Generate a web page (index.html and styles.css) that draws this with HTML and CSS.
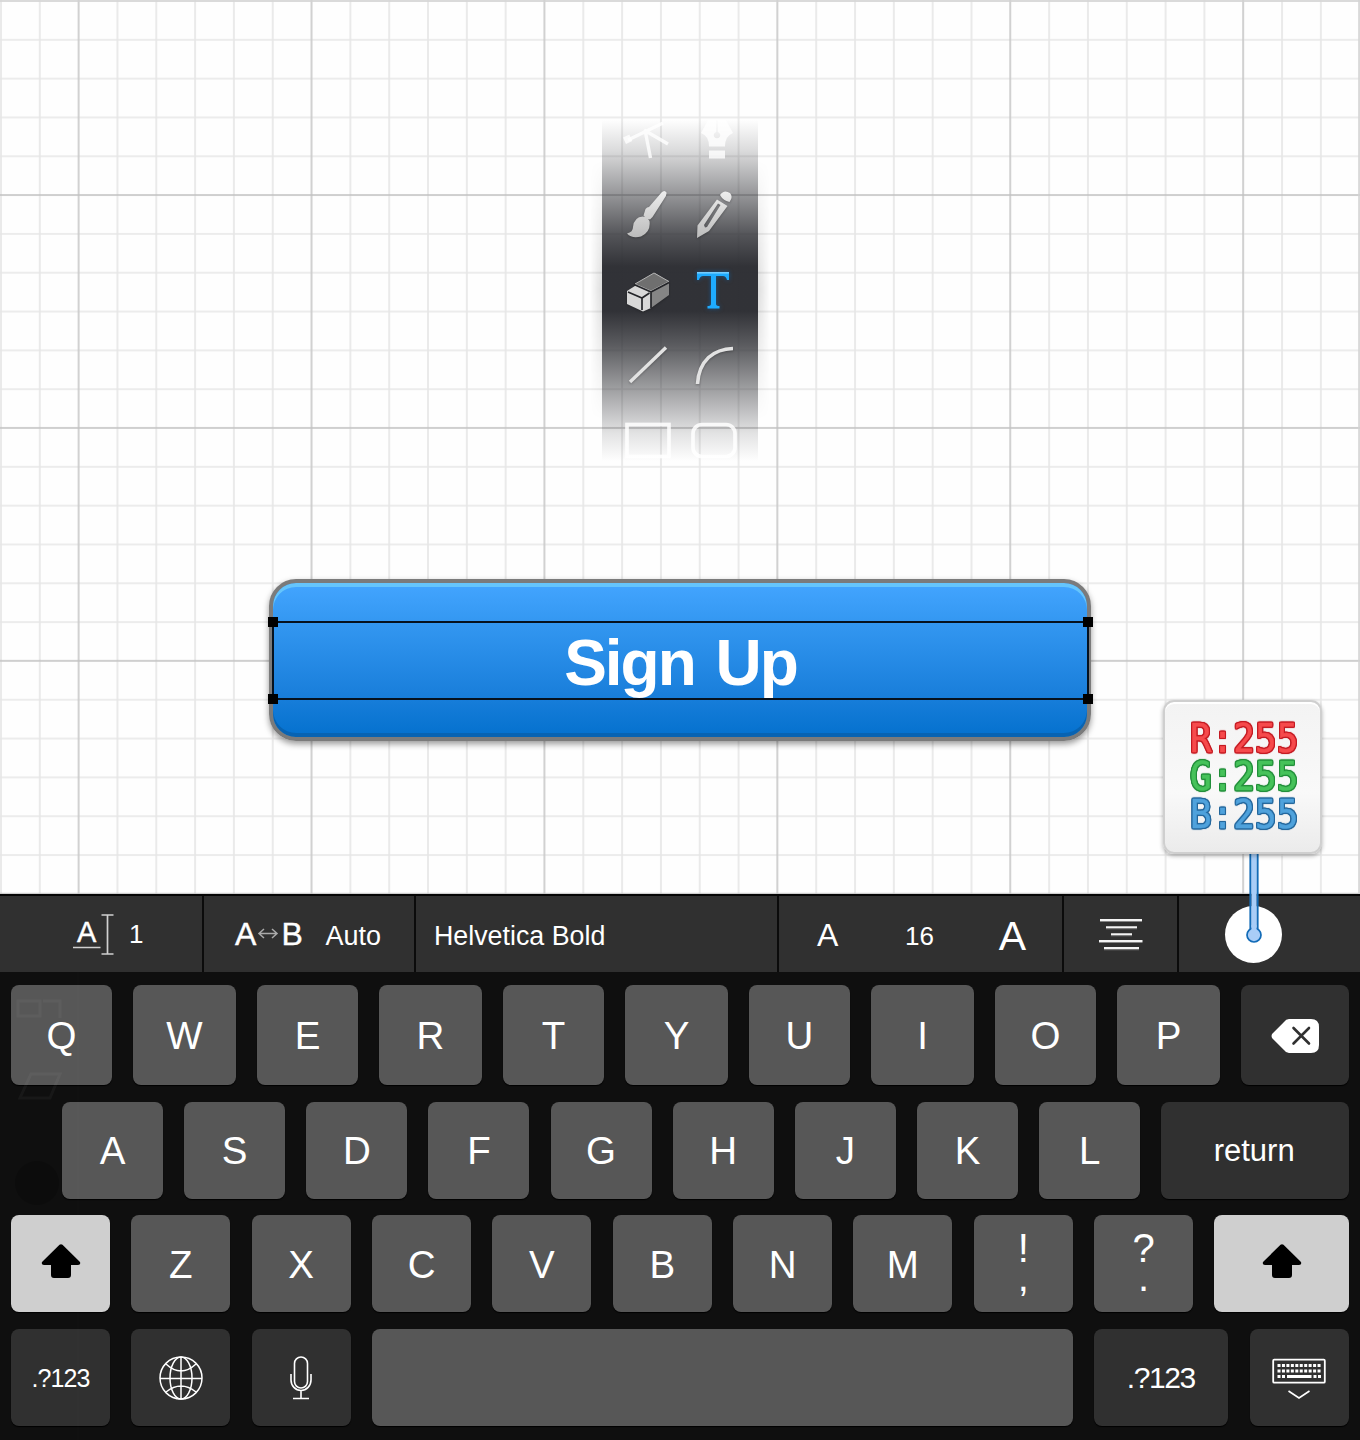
FILE: index.html
```html
<!DOCTYPE html>
<html lang="en">
<head>
<meta charset="utf-8">
<title>Vector Editor</title>
<link rel="stylesheet" href="styles.css">
</head>
<body>
<div class="app">
  <main class="canvas">
    <svg class="grid" width="1360" height="894">
      <defs>
        <pattern id="minor" x="0" y="0" width="38.82" height="38.82" patternUnits="userSpaceOnUse">
          <path d="M1 0V39M0 1H39" stroke="#000" stroke-opacity=".09" stroke-width="1.7"/>
        </pattern>
        <pattern id="major" x="77.6" y="194" width="232.9" height="232.9" patternUnits="userSpaceOnUse">
          <path d="M1 0V233M0 1H233" stroke="#000" stroke-opacity=".16" stroke-width="1.3"/>
        </pattern>
      </defs>
      <rect width="1360" height="894" fill="url(#minor)"/>
      <rect width="1360" height="894" fill="url(#major)"/>
      <path d="M0 1H1360M1359 0V894" stroke="#d4d4d4" stroke-width="1.5"/>
    </svg>

    <div class="palette">
      <svg class="tool faded" viewBox="0 0 66 75"><g stroke="#fff" stroke-width="3.4" fill="none" opacity=".8"><path d="M13 37L48 20M29 27L53 41M30 27L35.500 55"/></g><rect x="9" y="33" width="7" height="7" fill="#fff" opacity=".8" transform="rotate(-25 12 36)"/></svg>
      <svg class="tool faded" viewBox="0 0 66 75"><path fill="#fff" opacity=".8" fill-rule="evenodd" d="M35.300 12V29A3.200 3.200 0 1 0 36.700 29V12L45 17L52 30Q44 33 44 43.500H28Q28 33 20 30L27 17ZM28 47.500H44V55.500H28Z"/></svg>
      <svg class="tool" viewBox="0 0 66 75"><defs><linearGradient id="metal" x2="0" y2="1"><stop stop-color="#ededed"/><stop offset="1" stop-color="#bcbcbc"/></linearGradient></defs><path fill="url(#metal)" d="M46.500 14.500Q49.500 11.500 51.500 14.500Q52 17 49 21L37.500 39L35 41.500Q31 41 28.500 37.500L30.500 31Q32 29 34 29ZM28 38.500Q33 39.500 34.500 43Q36 54 26 58.500Q17 61 12 55.500Q18 54 18 49Q19 39 28 38.500Z"/></svg>
      <svg class="tool" viewBox="0 0 66 75"><path fill="url(#metal)" fill-rule="evenodd" d="M36 21.500L46.500 28L28 53L16 60L16.500 47.500ZM37 25.500L23 47L24 49.500L26 49L39.500 27ZM39 17Q43 11 49 15Q52.500 19 48.500 24Q42 22.500 39 17Z"/></svg>
      <svg class="tool" viewBox="0 0 66 75"><path d="M12 38L23 31L36 37V55L28 58.500L12 51Z" fill="#d8d8d8"/><path d="M24 32L40 24V20L54 29V42L36 55V39Z" fill="#858585"/><path d="M20 31L39 20L54 28.500L36 38Z" fill="#6f6f6f" stroke="#b4b4b4"/><path d="M13 39L27 45L34.500 40M27 45V57M19 31.500L36 39V55M36 39L54 29.500" stroke="#242529" stroke-width="1.700" fill="none"/></svg>
      <svg class="tool tool-active" viewBox="0 0 66 75"><path fill="#1eabff" d="M16 19H48V27H46Q45 23 42 23H35V51Q35 53 38.500 53V55.500H26.500V53Q30 53 30 51V23H22Q19 23 18 27H16Z"/><path d="M16 19.800H48" stroke="#79ceff" stroke-width="1.500"/></svg>
      <svg class="tool" viewBox="0 0 66 75"><path d="M15 54L51 19.500" stroke="#e2e2e2" stroke-width="3.400"/></svg>
      <svg class="tool" viewBox="0 0 66 75"><path d="M16.500 56Q17.500 39 27.500 29.500Q37 21 52 20.500" fill="none" stroke="#e2e2e2" stroke-width="3.600"/></svg>
      <svg class="tool faded" viewBox="0 0 66 75"><rect x="12" y="21.500" width="42" height="32" fill="none" stroke="#fff" stroke-opacity=".85" stroke-width="3.700"/></svg>
      <svg class="tool faded" viewBox="0 0 66 75"><rect x="12" y="21.500" width="42" height="32" rx="9" fill="none" stroke="#fff" stroke-opacity=".85" stroke-width="3.700"/></svg>
    </div>

    <div class="artwork">
      <div class="textbox">Sign Up<i class="handle nw"></i><i class="handle ne"></i><i class="handle sw"></i><i class="handle se"></i></div>
    </div>
  </main>

  <div class="toolbar">
    <div class="cell spacing">
      <svg width="42" height="44" viewBox="0 0 42 44"><text x="5" y="31" class="glyph" font-size="29">A</text><path d="M1 36.500H28.500M29.500 4H41.500M29.500 43H41.500M35.500 4V43" stroke="#d0d0d0" stroke-width="1.700"/></svg>
      <span>1</span>
    </div>
    <div class="cell width">
      <svg width="69" height="34" viewBox="0 0 69 34"><text x="0" y="29" class="glyph" font-size="32">A</text><text x="46.500" y="29" class="glyph" font-size="32">B</text><path d="M24 17.500H42M29 13L24 17.500L29 22M37 13L42 17.500L37 22" stroke="#aaa" stroke-width="1.500" fill="none"/></svg>
      <span>Auto</span>
    </div>
    <div class="cell font">Helvetica Bold</div>
    <div class="cell size"><span class="smaller">A</span><span class="value">16</span><span class="larger">A</span></div>
    <div class="cell align"><svg width="46" height="36" viewBox="0 0 46 36"><path d="M2 2H44M8 9.200H39M13 16.200H34M1 23H44.500M6 30H41" stroke="#f4f4f4" stroke-width="2"/><path d="M2 3.500H44M8 10.700H39M13 17.700H34M1 24.500H44.500M6 31.700H41" stroke="#858585"/></svg></div>
    <div class="cell color"><span class="swatch"></span></div>
  </div>

  <div class="keyboard">
    <div class="row row-1">
      <div class="key">Q</div><div class="key">W</div><div class="key">E</div><div class="key">R</div><div class="key">T</div><div class="key">Y</div><div class="key">U</div><div class="key">I</div><div class="key">O</div><div class="key">P</div>
      <div class="key dark"><svg width="48" height="34" viewBox="0 0 48 34"><path fill="#fff" d="M18 0H40Q48 0 48 8V26Q48 34 40 34H18Q15 34 13 31L1 19Q0 17 1 15L13 3Q15 0 18 0Z"/><path d="M22.500 9L38 24.500M38 9L22.500 24.500" stroke="#303030" stroke-width="2.600" stroke-linecap="round"/></svg></div>
    </div>
    <div class="row row-2">
      <div class="key">A</div><div class="key">S</div><div class="key">D</div><div class="key">F</div><div class="key">G</div><div class="key">H</div><div class="key">J</div><div class="key">K</div><div class="key">L</div>
      <div class="key dark return">return</div>
    </div>
    <div class="row row-3">
      <div class="key shift"><svg width="40" height="34" viewBox="0 0 40 34"><path d="M18.500 .8Q20 -.5 21.500 .8L39 18Q40 21 37 21H30V31Q30 34 27 34H13Q10 34 10 31V21H3Q0 21 1 18Z"/></svg></div>
      <div class="key">Z</div><div class="key">X</div><div class="key">C</div><div class="key">V</div><div class="key">B</div><div class="key">N</div><div class="key">M</div>
      <div class="key dual"><span>!</span><span>,</span></div><div class="key dual"><span>?</span><span>.</span></div>
      <div class="key shift"><svg width="40" height="34" viewBox="0 0 40 34"><path d="M18.500 .8Q20 -.5 21.500 .8L39 18Q40 21 37 21H30V31Q30 34 27 34H13Q10 34 10 31V21H3Q0 21 1 18Z"/></svg></div>
    </div>
    <div class="row row-4">
      <div class="key dark numeric">.?123</div>
      <div class="key dark"><svg width="44" height="44" viewBox="0 0 44 44"><g fill="none" stroke="#fff" stroke-width="1.500"><circle cx="22" cy="22" r="21"/><ellipse cx="22" cy="22" rx="11" ry="21"/><path d="M22 1V43M1 22.500H43M7 8Q22 22 37 8M7 36Q22 24 37 36"/></g></svg></div>
      <div class="key dark"><svg width="24" height="44" viewBox="0 0 24 44"><g fill="none" stroke="#fff" stroke-width="1.600"><rect x="5.500" y="1" width="13" height="31" rx="6.500"/><path d="M2 18V24A10 10.500 0 0 0 22 24V18M12 34.500V42M4 42.500H20"/></g></svg></div>
      <div class="key"></div>
      <div class="key dark numeric-large">.?123</div>
      <div class="key dark"><svg class="hide-icon" width="54" height="42" viewBox="0 0 54 42"><rect x="1.200" y="1.700" width="51.600" height="23" rx="1" fill="none" stroke="#fff" stroke-width="1.800"/><path d="M5.500 7.500H49M5.500 13H49" stroke="#fff" stroke-width="3" stroke-dasharray="3 1.450"/><path d="M5.500 18.500H8.500M10 18.500H13M15 18.500H39.500M41.500 18.500H44.500M46 18.500H49" stroke="#fff" stroke-width="3"/><path d="M16.500 33L27 40L37.500 33" fill="none" stroke="#fff" stroke-width="1.600"/></svg></div>
    </div>
    <svg class="underlay" width="80" height="468"><path d="M78 0V468" stroke="#fff" stroke-opacity=".02"/><g fill="none" stroke="#fff" stroke-opacity=".04" stroke-width="3"><rect x="18" y="29" width="22" height="15"/><path d="M43 29H60V46M31 102H60L50 126H20Z"/></g><circle cx="37" cy="211" r="22" fill="#000" fill-opacity=".2"/></svg>
  </div>

  <svg class="connector" width="18" height="94" viewBox="0 0 18 94"><path d="M5.500 0V76M12.500 0V76" stroke="#126bb7" stroke-width="2.200"/><path d="M9 0V77" stroke="#a9cdf7" stroke-width="5"/><circle cx="9" cy="82" r="7" fill="#a9cdf7" stroke="#126bb7" stroke-width="1.700"/><path d="M9 72V82" stroke="#a9cdf7" stroke-width="5"/></svg>
  <div class="popover">
    <svg width="110" height="114" viewBox="0 0 110 114">
      <g transform="scale(1 1.100)">
        <text class="channel red" x="1" y="29.500">R:255</text>
        <text class="channel green" x="1" y="64">G:255</text>
        <text class="channel blue" x="1" y="98.500">B:255</text>
      </g>
    </svg>
  </div>
</div>
</body>
</html>
```
FILE: styles.css
```css
* { box-sizing: border-box; }

body {
  margin: 0;
  font-family: "Liberation Sans", Arial, sans-serif;
  color: #fff;
}

svg { overflow: visible; }

.app {
  position: relative;
  width: 1360px;
  height: 1440px;
  overflow: hidden;
  display: flex;
  flex-direction: column;
}

.canvas {
  position: relative;
  height: 894px;
  background: #fefefe;
}

.grid { display: block; overflow: hidden; }

.palette {
  position: absolute;
  left: 602px;
  top: 120px;
  width: 156px;
  height: 341px;
  padding: 0 11px 0 13px;
  display: grid;
  grid-template-columns: 66px 66px;
  grid-auto-rows: 75px;
  align-content: center;
  overflow: hidden;
  background: linear-gradient(rgba(45,46,51,0), rgba(45,46,51,.17) 9%, rgba(45,46,51,.5) 22%, rgba(45,46,51,.82) 34%, rgba(45,46,51,.98) 43%, rgba(45,46,51,.98) 56%, rgba(45,46,51,.78) 66%, rgba(45,46,51,.48) 78%, rgba(45,46,51,.13) 92%, rgba(45,46,51,0));
}

/* soft side shadow, strongest at the middle of the wheel */
.canvas::after {
  content: "";
  position: absolute;
  left: 590px;
  top: 160px;
  width: 180px;
  height: 260px;
  background:
    linear-gradient(to right, transparent, rgba(0,0,0,.13)) left / 12px 100% no-repeat,
    linear-gradient(to left, transparent, rgba(0,0,0,.13)) right / 12px 100% no-repeat;
  -webkit-mask-image: linear-gradient(transparent, #000 50%, transparent);
  mask-image: linear-gradient(transparent, #000 50%, transparent);
}

.tool {
  width: 66px;
  height: 75px;
  filter: drop-shadow(0 1px 1px rgba(0,0,0,.25));
}
.tool-active { filter: drop-shadow(0 0 2px rgba(0,120,220,.5)); }
.faded { filter: none; }

.artwork {
  position: absolute;
  left: 269px;
  top: 579px;
  width: 822px;
  height: 162px;
  border: 4px solid #7b7b7b;
  border-radius: 27px;
  background: linear-gradient(#43a5ff, #3296f0 28%, #1b80dc 70%, #0471ce);
  box-shadow: inset 0 4px 0 #65c5fc, inset 0 -4px 0 #0863b2, 0 3px 6px rgba(0,0,0,.4);
}

.textbox {
  position: absolute;
  left: -1px;
  right: -2px;
  top: 38px;
  height: 79px;
  border: 2px solid #06121f;
  display: flex;
  align-items: center;
  justify-content: center;
  padding-top: 4px;
  font-size: 64px;
  font-weight: bold;
  letter-spacing: -2px;
  word-spacing: 5px;
}
.handle {
  position: absolute;
  width: 10px;
  height: 10px;
  background: #000;
}
.nw { left: -6px; top: -6px; }
.ne { right: -6px; top: -6px; }
.sw { left: -6px; bottom: -6px; }
.se { right: -6px; bottom: -6px; }

.toolbar {
  height: 78px;
  display: grid;
  grid-template-columns: 203.500px 212.500px 363px 285px 115px 1fr;
  border-top: 2px solid #050505;
  background: #303030;
  font-size: 26px;
}
.cell {
  display: flex;
  align-items: center;
  border-right: 2px solid #0b0b0b;
  padding-top: 4px;
}
.cell:last-child { border-right: 0; }
.glyph { fill: #fff; stroke: #fff; stroke-width: .400px; }
.spacing { padding-left: 72px; gap: 15px; }
.spacing svg, .width svg { margin-top: -7px; }
.spacing span { margin-top: -3px; }
.width { padding-left: 31.500px; gap: 21.500px; font-size: 27px; }
.font { padding-left: 18px; font-size: 26.800px; }
.size { justify-content: space-between; padding: 4px 36px 0 38px; }
.smaller { font-size: 32px; margin-top: -1px; }
.value { margin-left: 2px; }
.larger { font-size: 41px; }
.align, .color { justify-content: center; }
.color { padding: 1px 32px 0 0; }
.swatch {
  width: 57px;
  height: 57px;
  border-radius: 50%;
  background: #fff;
}

.keyboard {
  position: relative;
  height: 468px;
  padding: 13px 11px 14px;
  display: grid;
  grid-template-rows: 100px 97px 97px 97px;
  gap: 16.5px;
  background: #0f0f0f;
}
.row { display: grid; }
.row-1 { grid-template-columns: 101px 103px 101px 103px 101px 103px 101px 103px 101px 103px 1fr; column-gap: 21px; }
.row-2 { grid-template-columns: repeat(9, 101px) 1fr; column-gap: 21.150px; padding-left: 51px; }
.row-3 { grid-template-columns: repeat(10, 99px) 1fr; column-gap: 21.350px; }
.row-4 { grid-template-columns: 99px 99px 99px 701px 134px 1fr; column-gap: 21.350px; }
.key {
  display: flex;
  align-items: center;
  justify-content: center;
  padding-top: 2px;
  border-radius: 8px;
  background: #575757;
  box-shadow: 0 1px 1px #000;
  font-size: 38.500px;
}
.dark { background: #303030; }
.shift { background: #cfcfcf; padding: 0 0 5px; }
.dual {
  flex-direction: column;
  padding: 0 0 1px;
  font-size: 40px;
}
.dual span { line-height: 29px; }
.dual span:first-child { margin-top: -1px; }
.return { font-size: 31px; padding: 2px 2px 1px 0; }
.numeric { font-size: 25px; letter-spacing: -.900px; }
.numeric-large { font-size: 30px; letter-spacing: -1.400px; padding-right: 1px; }
.hide-icon { margin-top: 2px; }
.underlay { position: absolute; left: 0; top: 0; overflow: hidden; }

.popover {
  position: absolute;
  left: 1163px;
  top: 700px;
  width: 159px;
  height: 154px;
  border: 2px solid #cfcfcf;
  border-radius: 11px;
  background: linear-gradient(#f3f3f3, #f9f9f9 60%, #ebebeb);
  box-shadow: inset 0 2px 0 #fff, 0 2px 4px rgba(0,0,0,.3);
  display: flex;
  align-items: center;
  justify-content: center;
  padding-left: 2px;
}
/* light rounded strokes with a darker rim */
.channel {
  font-family: "DejaVu Sans Mono", monospace;
  font-size: 36px;
  stroke-width: .500px;
  stroke-linejoin: round;
}
.red { fill: #f64a4c; stroke: #f64a4c; filter: drop-shadow(1px 0 #c41a22) drop-shadow(-1px 0 #c41a22) drop-shadow(0 1px #c41a22) drop-shadow(0 -1px #c41a22); }
.green { fill: #46c25a; stroke: #46c25a; filter: drop-shadow(1px 0 #228f3a) drop-shadow(-1px 0 #228f3a) drop-shadow(0 1px #228f3a) drop-shadow(0 -1px #228f3a); }
.blue { fill: #4fa2dc; stroke: #4fa2dc; filter: drop-shadow(1px 0 #24679c) drop-shadow(-1px 0 #24679c) drop-shadow(0 1px #24679c) drop-shadow(0 -1px #24679c); }
.connector {
  position: absolute;
  left: 1245px;
  top: 853px;
}
```
